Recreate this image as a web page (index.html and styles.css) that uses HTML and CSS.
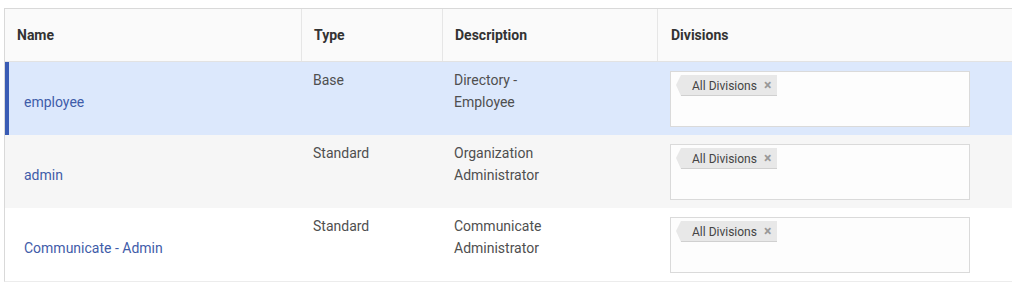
FILE: index.html
```html
<!DOCTYPE html>
<html>
<head>
<meta charset="utf-8">
<link rel="stylesheet" href="styles.css">
</head>
<body>
<div class="table">
  <div class="row head">
    <div class="cell c-name">Name</div>
    <div class="cell c-type">Type</div>
    <div class="cell c-desc">Description</div>
    <div class="cell c-div">Divisions</div>
  </div>
  <div class="row body selected">
    <div class="cell c-name"><a class="link">employee</a></div>
    <div class="cell c-type">Base</div>
    <div class="cell c-desc">Directory -<br>Employee</div>
    <div class="cell c-div"><div class="box"><span class="tag">All Divisions <span class="x">×</span></span></div></div>
  </div>
  <div class="row body alt">
    <div class="cell c-name"><a class="link">admin</a></div>
    <div class="cell c-type">Standard</div>
    <div class="cell c-desc">Organization<br>Administrator</div>
    <div class="cell c-div"><div class="box"><span class="tag">All Divisions <span class="x">×</span></span></div></div>
  </div>
  <div class="row body">
    <div class="cell c-name"><a class="link">Communicate - Admin</a></div>
    <div class="cell c-type">Standard</div>
    <div class="cell c-desc">Communicate<br>Administrator</div>
    <div class="cell c-div"><div class="box"><span class="tag">All Divisions <span class="x">×</span></span></div></div>
  </div>
</div>
</body>
</html>
```

FILE: styles.css
```css
html, body {
  margin: 0;
  padding: 0;
  background: #ffffff;
}
body {
  padding: 8px 0 0 4px;
  font-family: Roboto, "Liberation Sans", sans-serif;
  font-size: 14px;
  color: #4f4f4f;
}
.table {
  border-top: 1px solid #d9d9d9;
  border-left: 1px solid #d9d9d9;
  border-bottom: 1px solid #ececec;
  width: 1010px;
}
.row {
  display: grid;
  grid-template-columns: 297px 141px 215px 1fr;
}
.head {
  height: 52px;
  background: #fafafa;
  border-bottom: 1px solid #e2e2e2;
  font-weight: bold;
  color: #333;
}
.head .cell {
  border-right: 1px solid #e6e6e6;
  padding: 17px 0 0 12px;
  line-height: 18px;
}
.head .c-div { border-right: none; padding-left: 13px; }
.body {
  height: 73px;
  line-height: 22px;
}
.body .cell {
  padding: 7px 0 0 11px;
}
.body .c-name {
  padding: 29px 0 0 19px;
}
.selected {
  background: #dce8fc;
  box-shadow: inset 4px 0 0 #3a5cb5;
}
.alt {
  background: #f6f6f6;
}
.link {
  color: #3f5ca9;
}
.body .c-div {
  padding: 9px 0 0 12px;
}
.box {
  width: 300px;
  height: 56px;
  border: 1px solid #dadada;
  background: #fdfdfd;
  box-sizing: border-box;
  padding: 3px 0 0 6px;
  line-height: 20px;
}
.tag {
  display: inline-block;
  position: relative;
  height: 20px;
  line-height: 20px;
  padding: 0 6px 0 11px;
  background: #e8e8e8;
  border-bottom: 1px solid #d0d0d0;
  font-size: 12px;
  color: #444;
  margin-left: 4px;
}
.tag::before {
  content: "";
  position: absolute;
  left: -5px;
  top: 0;
  border-style: solid;
  border-width: 10px 5px 11px 0;
  border-color: transparent #e8e8e8 transparent transparent;
}
.x {
  color: #999;
  font-size: 14px;
  font-weight: bold;
  margin-left: 4px;
}
```
